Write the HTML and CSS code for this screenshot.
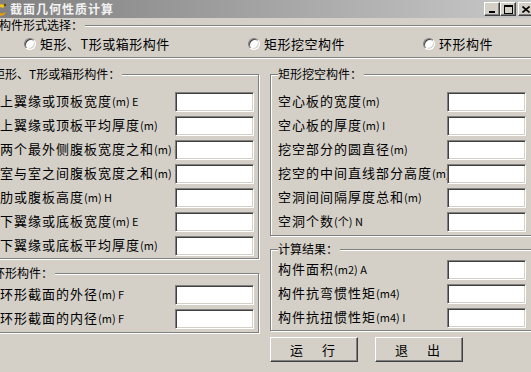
FILE: index.html
```html
<!DOCTYPE html>
<html lang="zh-CN">
<head>
  <meta charset="UTF-8" />
  <title>截面几何性质计算</title>
  <link rel="stylesheet" href="styles.css">
</head>
<body>
  <div class="window">

    <!-- Title bar -->
    <div class="titlebar">
      <div class="title">
        <svg class="app-icon" width="16" height="16" viewBox="0 0 16 16">
          <path d="M2 9 C3 4 8 2 13 4 L11 7 C8 5 6 7 6 10 Z" fill="#f2c21b"/>
          <path d="M6 10 C7 13 11 13 14 11 L12 14 C8 16 4 14 3 11 Z" fill="#e8a000"/>
          <rect x="12" y="3" width="2" height="2" fill="#604000"/>
        </svg>
        <span>截面几何性质计算</span>
      </div>
      <div class="caption-btns">
        <button class="cap-btn">
          <svg width="8" height="7" viewBox="0 0 8 7"><rect x="1" y="5" width="6" height="2" fill="#000"/></svg>
        </button>
        <button class="cap-btn">
          <svg width="9" height="9" viewBox="0 0 9 9"><rect x="0.5" y="0.5" width="8" height="8" fill="none" stroke="#000"/><rect x="0" y="1" width="9" height="1" fill="#000"/></svg>
        </button>
        <button class="cap-btn close">
          <svg width="8" height="7" viewBox="0 0 8 7"><path d="M0.5 0.5 L7.5 6.5 M7.5 0.5 L0.5 6.5" stroke="#000" stroke-width="1.6"/></svg>
        </button>
      </div>
    </div>

    <!-- Member type -->
    <fieldset class="group type-group">
      <legend>构件形式选择：</legend>
      <div class="radios">
        <label class="radio-opt opt-1"><span class="radio"></span>矩形、T形或箱形构件</label>
        <label class="radio-opt opt-2"><span class="radio"></span>矩形挖空构件</label>
        <label class="radio-opt"><span class="radio"></span>环形构件</label>
      </div>
    </fieldset>

    <div class="columns">
      <div class="col col-left">
        <fieldset class="group rect-group">
          <legend>矩形、T形或箱形构件：</legend>
          <div class="rows">
            <div class="row"><span class="label">上翼缘或顶板宽度<span class="unit">(m) E</span></span><input type="text"></div>
            <div class="row"><span class="label">上翼缘或顶板平均厚度<span class="unit">(m)</span></span><input type="text"></div>
            <div class="row"><span class="label">两个最外侧腹板宽度之和<span class="unit">(m) E</span></span><input type="text"></div>
            <div class="row"><span class="label">室与室之间腹板宽度之和<span class="unit">(m)</span></span><input type="text"></div>
            <div class="row"><span class="label">肋或腹板高度<span class="unit">(m) H</span></span><input type="text"></div>
            <div class="row"><span class="label">下翼缘或底板宽度<span class="unit">(m) E</span></span><input type="text"></div>
            <div class="row"><span class="label">下翼缘或底板平均厚度<span class="unit">(m)</span></span><input type="text"></div>
          </div>
        </fieldset>

        <fieldset class="group ring-group">
          <legend>环形构件：</legend>
          <div class="rows">
            <div class="row"><span class="label">环形截面的外径<span class="unit">(m) F</span></span><input type="text"></div>
            <div class="row"><span class="label">环形截面的内径<span class="unit">(m) F</span></span><input type="text"></div>
          </div>
        </fieldset>
      </div>

      <div class="col col-right">
        <fieldset class="group hollow-group">
          <legend>矩形挖空构件：</legend>
          <div class="rows">
            <div class="row"><span class="label">空心板的宽度<span class="unit">(m)</span></span><input type="text"></div>
            <div class="row"><span class="label">空心板的厚度<span class="unit">(m) I</span></span><input type="text"></div>
            <div class="row"><span class="label">挖空部分的圆直径<span class="unit">(m)</span></span><input type="text"></div>
            <div class="row"><span class="label">挖空的中间直线部分高度<span class="unit">(m)</span></span><input type="text"></div>
            <div class="row"><span class="label">空洞间间隔厚度总和<span class="unit">(m)</span></span><input type="text"></div>
            <div class="row"><span class="label">空洞个数<span class="unit">(个) N</span></span><input type="text"></div>
          </div>
        </fieldset>

        <fieldset class="group result-group">
          <legend>计算结果：</legend>
          <div class="rows">
            <div class="row"><span class="label">构件面积<span class="unit">(m2) A</span></span><input type="text"></div>
            <div class="row"><span class="label">构件抗弯惯性矩<span class="unit">(m4)</span></span><input type="text"></div>
            <div class="row"><span class="label">构件抗扭惯性矩<span class="unit">(m4) I</span></span><input type="text"></div>
          </div>
        </fieldset>

        <div class="actions">
          <button class="btn">运　行</button>
          <button class="btn">退　出</button>
        </div>
      </div>
    </div>

  </div>
</body>
</html>
```

FILE: styles.css
```css
* { box-sizing: border-box; }
body {
  margin: 0;
  background: #d4d0c8;
  font-family: "Noto Sans CJK SC", "Noto Sans", sans-serif;
  font-size: 13px;
  color: #000;
}
.window { width: 531px; height: 372px; overflow: clip; }

/* title bar */
.titlebar {
  height: 18px;
  display: flex;
  align-items: center;
  justify-content: space-between;
  background: linear-gradient(to right, #808080, #c8c8c8);
}
.title { display: flex; align-items: center; }
.app-icon { margin-left: -8px; }
.title span {
  margin-left: 2px;
  color: #f2f2f2;
  font-weight: bold;
  font-size: 12px;
  letter-spacing: 1px;
  line-height: 18px;
}
.caption-btns { display: flex; margin-right: -3px; }
.cap-btn {
  width: 16px;
  height: 14px;
  padding: 0;
  display: flex;
  align-items: center;
  justify-content: center;
  background: #d4d0c8;
  border: 1px solid;
  border-color: #fff #404040 #404040 #fff;
  box-shadow: inset -1px -1px #808080;
}
.cap-btn.close { margin-left: 2px; }

/* etched group boxes (right edge runs off the window) */
.group {
  margin: 0;
  min-width: 0;
  border: 1px solid #808080;
  box-shadow: inset 1px 1px #fff, 1px 1px #fff;
}
.group legend {
  padding: 0 2px 0 0;
  font-size: 12px;
  line-height: 14px;
  background: #d4d0c8;
}
.type-group, .hollow-group, .result-group { border-right: none; }

.type-group { width: 541px; margin: 0 0 0 -10px; padding: 5px 0 6px 8px; }
.radios { display: flex; height: 14px; padding-left: 25px; }
.radio-opt {
  display: flex;
  align-items: center;
  gap: 4px;
  font-size: 13px;
  letter-spacing: 0.5px;
  line-height: 14px;
  white-space: nowrap;
}
.opt-1 { width: 224px; }
.opt-2 { width: 175px; }
.radio {
  width: 12px;
  height: 12px;
  border-radius: 50%;
  background: #fff;
  border: 1px solid;
  border-color: #808080 #fff #fff #808080;
  box-shadow: inset 1px 1px #404040, inset -1px -1px #d4d0c8;
}

/* two columns */
.columns { display: flex; align-items: flex-start; width: 543px; margin: 9px 0 0 -12px; }
.col { display: flex; flex-direction: column; flex: none; }
.col-left { width: 271px; }
.col-right { width: 261px; margin-left: 11px; }

.rect-group { padding: 11px 4px 2px 4px; }
.ring-group { margin-top: 7px; padding: 5px 4px 3px 4px; }
.hollow-group { padding: 11px 0 3px 7px; }
.result-group { margin-top: 6px; padding: 4px 0 2px 7px; }

.rows { display: flex; flex-direction: column; gap: 4px; }
.col-left .rows { padding-left: 7px; }
.row { display: flex; height: 20px; }
.label {
  flex: none;
  width: 175px;
  overflow: clip;
  white-space: nowrap;
  line-height: 18px;
  letter-spacing: 1px;
}
.col-right .label { width: 169px; }
.unit { font-size: 11px; letter-spacing: 0; }

input {
  flex: none;
  width: 79px;
  height: 20px;
  padding: 0 2px;
  margin: 0;
  font: inherit;
  background: #fff;
  border: 1px solid;
  border-color: #808080 #fff #fff #808080;
  box-shadow: inset 1px 1px #404040, inset -1px -1px #d4d0c8;
  outline: none;
}

/* buttons */
.actions { display: flex; gap: 17px; margin-top: 6px; }
.btn {
  width: 88px;
  height: 25px;
  padding: 0;
  font: inherit;
  letter-spacing: 3px;
  background: #d4d0c8;
  border: 1px solid;
  border-color: #fff #404040 #404040 #fff;
  box-shadow: inset -1px -1px #808080;
}
```
